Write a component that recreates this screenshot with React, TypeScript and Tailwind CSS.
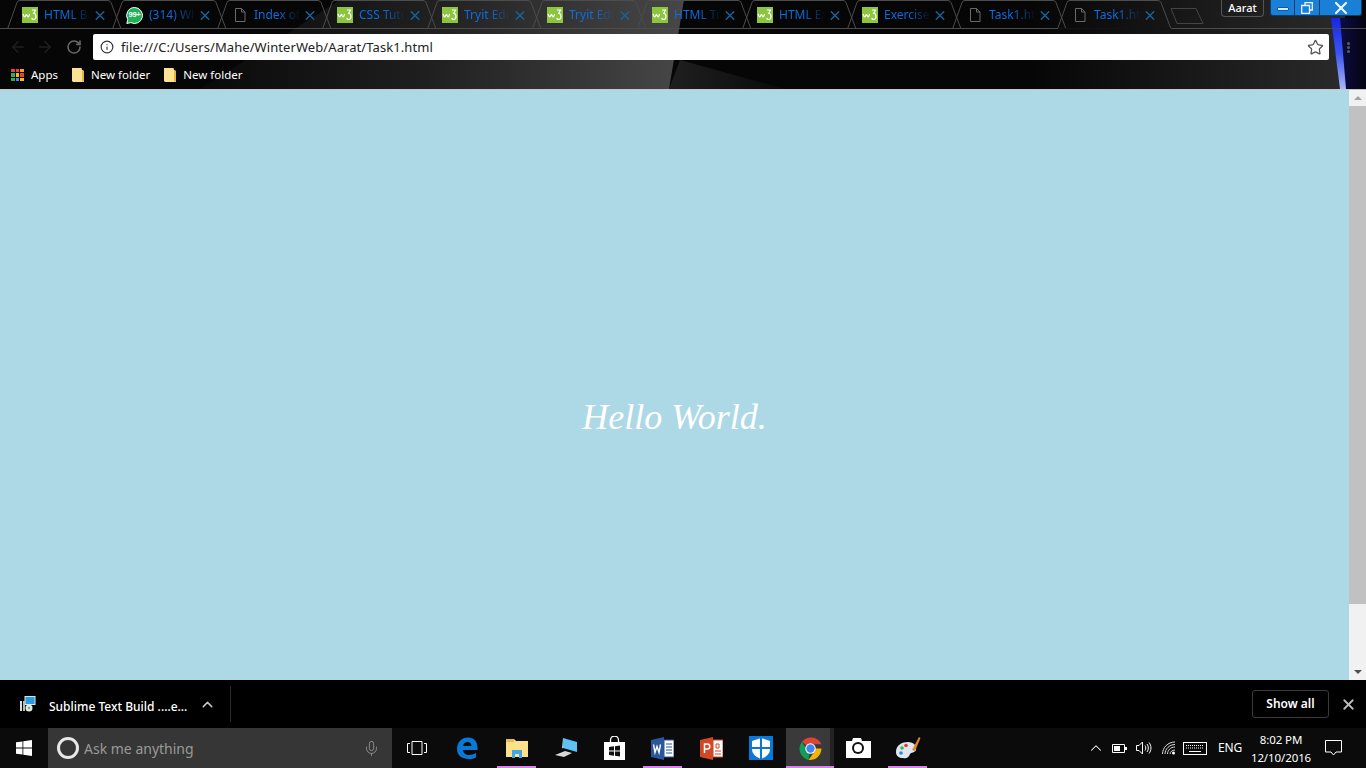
import { ArrowLeft, ArrowRight, ChevronUp, Info, Mic, RotateCw, Star, X } from "lucide-react";

const ui = "font-['Noto_Sans',sans-serif]";

const tabs = [
  { title: "HTML Ba", icon: "w3" },
  { title: "(314) Wh", icon: "wa" },
  { title: "Index of", icon: "file" },
  { title: "CSS Tuto", icon: "w3" },
  { title: "Tryit Edit", icon: "w3" },
  { title: "Tryit Edit", icon: "w3" },
  { title: "HTML Tu", icon: "w3" },
  { title: "HTML Ex", icon: "w3" },
  { title: "Exercise", icon: "w3" },
  { title: "Task1.ht", icon: "file" },
  { title: "Task1.ht", icon: "file", active: true },
];

function W3Icon() {
  return (
    <svg width="16" height="16" viewBox="0 0 16 16" className="shrink-0">
      <rect width="16" height="16" fill="#8cc63f" />
      <path d="M1 7c.6 2 1.200 2.800 1.800 2.800.8 0 1-2.200 1.600-2.200.7 0 .8 2.200 1.600 2.200.7 0 1.200-1 1.600-2.800" stroke="#fff" strokeWidth="1.200" fill="none" />
      <path d="M10 3h3.500l-1.800 3.500c1.800 0 2.300 1.300 2.300 2.800 0 1.800-1 3.200-2.300 3.200-1.100 0-1.800-.7-2-1.500" stroke="#fff" strokeWidth="1.200" fill="none" />
    </svg>
  );
}

function WhatsIcon() {
  return (
    <div className="relative -ml-[1px] size-[17px] shrink-0">
      <svg width="17" height="17" viewBox="0 0 17 17" className="absolute inset-0">
        <path d="M8.500 0.500a8 8 0 1 1-3.700 15.100L0.800 16.500l1-3.800A8 8 0 0 1 8.500 0.500z" fill="#1fb355" stroke="#fff" />
      </svg>
      <span className="absolute inset-0 flex items-center justify-center font-['Liberation_Sans',sans-serif] text-[7.500px] font-bold tracking-[-0.3px] text-white">
        99+
      </span>
    </div>
  );
}

function FileIcon() {
  return (
    <svg width="16" height="16" viewBox="0 0 16 16" fill="none" stroke="#6a6a6a" className="shrink-0">
      <path d="M3.500 1.500h6l3.500 3.500v9.500h-9.500z M9.500 1.500v3.500h3.500" />
    </svg>
  );
}

function Tab({ title, icon, active }: { title: string; icon: string; active?: boolean }) {
  return (
    <div className="relative flex h-[28px] w-[105px] shrink-0 items-center pl-[15px] pt-[2px]">
      <svg width="116" height="29" viewBox="0 0 116 29" fill="none" className="absolute left-0 top-0">
        <path d="M0.500 29 L10 2.500 Q10.500 0.500 13 0.500 L101 0.500 Q103 0.500 104 2.500 L114 29" stroke="#4c4c4c" />
      </svg>
      {active && <div className="absolute bottom-[-1px] left-[1px] h-[1px] w-[113px] bg-[#131313]" />}
      {icon === "w3" && <W3Icon />}
      {icon === "wa" && <WhatsIcon />}
      {icon === "file" && <FileIcon />}
      <span className="ml-[6px] w-[49px] shrink-0 whitespace-nowrap bg-gradient-to-r from-[#0a6fe6] from-50% to-[#0a6fe600] to-95% bg-clip-text text-[12px] text-transparent">
        {title}
      </span>
      <X size={15} strokeWidth={2.300} className="shrink-0 -translate-x-[0.5px] text-[#17639f]" />
    </div>
  );
}

function AppsIcon() {
  const colors = ["#ea4335", "#ea4335", "#f4a020", "#34a853", "#fbbc05", "#ea4335", "#34a853", "#4285f4", "#fbbc05"];
  return (
    <div className="grid size-[13px] grid-cols-3 gap-[1px]">
      {colors.map((c, i) => (
        <div key={i} className="size-[3.600px]" style={{ background: c }} />
      ))}
    </div>
  );
}

function FolderIcon() {
  return (
    <svg width="12" height="14" viewBox="0 0 12 14" className="shrink-0">
      <path d="M0 0h9.500l.5 2 2 1v11H1l-1-1z" fill="#fde293" />
      <path d="M10 2l2 1v10l-2 1z" fill="#e2b93f" />
    </svg>
  );
}

function Bookmark({ label }: { label: string }) {
  return (
    <div className="flex items-center gap-[7px]">
      <FolderIcon />
      <span className="text-[11.500px] text-white">{label}</span>
    </div>
  );
}

function Header() {
  return (
    <div className={`relative h-[89px] shrink-0 overflow-hidden bg-[#060606] ${ui}`}>
      {/* theme artwork behind the chrome */}
      <svg width="1366" height="89" viewBox="0 0 1366 89" className="absolute left-0 top-0">
        <defs>
          <linearGradient id="g1" x1="0" x2="1" y1="0" y2="0">
            <stop offset="0" stopColor="#0a0a0a" />
            <stop offset="0.45" stopColor="#1e1e1e" />
            <stop offset="1" stopColor="#474747" />
          </linearGradient>
          <linearGradient id="g2" x1="0" x2="1" y1="0" y2="0">
            <stop offset="0" stopColor="#1f1f1f" />
            <stop offset="1" stopColor="#0a0a0a" />
          </linearGradient>
          <linearGradient id="g3" x1="0" x2="0" y1="0" y2="1">
            <stop offset="0" stopColor="#1726e8" />
            <stop offset="0.5" stopColor="#3a55f0" />
            <stop offset="1" stopColor="#aab6f7" />
          </linearGradient>
          <linearGradient id="g4" x1="0" x2="1" y1="0" y2="0">
            <stop offset="0" stopColor="#060606" />
            <stop offset="1" stopColor="#2a2a2a" />
          </linearGradient>
          <linearGradient id="g5" x1="0" x2="1" y1="0" y2="0">
            <stop offset="0" stopColor="#0c0c45" />
            <stop offset="1" stopColor="#040410" />
          </linearGradient>
        </defs>
        <polygon points="340,0 684,0 669,89 200,89" fill="url(#g1)" />
        <polygon points="680,60 785,89 669,89" fill="url(#g2)" />
        <polygon points="1030,0 1345,0 1345,89 1030,89" fill="url(#g4)" />
        <polygon points="1340,18 1366,18 1366,89 1345,89" fill="url(#g5)" />
        <polygon points="1331,18 1340,18 1346,89 1340,89" fill="url(#g3)" />
      </svg>

      <div className="relative flex h-[29px] border-b border-[#4c4c4c] pl-[7px]">
        {tabs.map((t, i) => (
          <Tab key={i} title={t.title} icon={t.icon} active={t.active} />
        ))}
        <div className="ml-[8px] mt-[7px]">
          <svg width="34" height="18" viewBox="0 0 34 18" fill="none" stroke="#444">
            <path d="M1 1.500h25l7 15H7z" strokeLinejoin="round" />
          </svg>
        </div>
        <div className="ml-auto flex items-start pr-[4px]">
          <div className="mr-[6px] flex h-[17px] w-[43px] items-center justify-center rounded-b-[4px] border border-t-0 border-[#555] text-[11px] font-medium text-white">
            Aarat
          </div>
          <div className="flex h-[16px] w-[92px] overflow-hidden rounded-b-[3px] border-x border-b border-[#0d3f6e] bg-[#1a7fd6]">
            <div className="flex w-[24px] items-center justify-center border-r border-[#0d3f6e]">
              <div className="mt-[3px] h-[4px] w-[12px] rounded-[1px] border border-[#0d5ba0] bg-[#d8ecfa]" />
            </div>
            <div className="flex w-[25px] items-center justify-center border-r border-[#0d3f6e]">
              <svg width="12" height="12" viewBox="0 0 12 12" fill="none" stroke="#e8f4fc" strokeWidth="1.300">
                <path d="M4 3V.7h7.300V8H9 M.7 3.500H8.500v7.800H.7z" />
              </svg>
            </div>
            <div className="flex flex-1 items-center justify-center">
              <X size={20} strokeWidth={2.600} className="text-[#e8f4fc]" />
            </div>
          </div>
        </div>
      </div>

      <div className="relative h-[33px] pt-[5px]">
        <div className="flex h-[26px] items-center">
          <ArrowLeft size={18} className="ml-[9px] text-[#1f1f1f]" />
          <ArrowRight size={18} className="ml-[9px] text-[#1f1f1f]" />
          <RotateCw size={16} strokeWidth={2.400} className="ml-[12px] text-[#666]" />
          <div className="ml-[11px] flex h-[26px] w-[1236px] items-center rounded-[2px] bg-white pl-[7px] pr-[5px]">
            <Info size={14} className="text-[#333]" />
            <span className="ml-[7px] mt-[1px] text-[13px] tracking-[0.08px] text-[#222]">file:///C:/Users/Mahe/WinterWeb/Aarat/Task1.html</span>
            <Star size={17} strokeWidth={1.800} className="ml-auto text-[#555]" />
          </div>
          <div className="ml-[18px] flex flex-col gap-[1px]">
            <div className="size-[3px] rounded-full bg-[#5c5c5c]" />
            <div className="size-[3px] rounded-full bg-[#5c5c5c]" />
            <div className="size-[3px] rounded-full bg-[#5c5c5c]" />
          </div>
        </div>
      </div>

      <div className="relative flex h-[27px] items-center pb-[1px] pl-[11px]">
        <AppsIcon />
        <span className="ml-[7px] text-[11.500px] text-white">Apps</span>
        <div className="ml-[14px]">
          <Bookmark label="New folder" />
        </div>
        <div className="ml-[14px]">
          <Bookmark label="New folder" />
        </div>
      </div>
    </div>
  );
}

function Scrollbar() {
  return (
    <div className="flex w-[17px] shrink-0 flex-col bg-[#f1f1f1]">
      <div className="flex h-[16px] items-center justify-center">
        <div className="size-0 border-x-[4px] border-b-[4px] border-x-transparent border-b-[#a3a3a3]" />
      </div>
      <div className="h-[498px] bg-[#c1c1c1]" />
      <div className="flex-1" />
      <div className="flex h-[17px] items-center justify-center">
        <div className="size-0 border-x-[4px] border-t-[4px] border-x-transparent border-t-[#505050]" />
      </div>
    </div>
  );
}

function DownloadBar() {
  return (
    <div className={`flex h-[48px] shrink-0 items-center bg-black ${ui}`}>
      <div className="flex h-[36px] w-[231px] items-center border-r border-[#2a2a2a] pl-[20px]">
        <svg width="16" height="17" viewBox="0 0 16 17" className="shrink-0">
          <rect x="5" y="0.500" width="10" height="8" fill="#2a9be0" stroke="#cfe8f7" />
          <rect x="0" y="5" width="2" height="10" fill="#ddd" />
          <rect x="3" y="5" width="2" height="10" fill="#bbb" />
          <circle cx="9" cy="12" r="3.500" fill="#e8e8e8" />
          <circle cx="9" cy="12" r="1.200" fill="#6bbf3a" />
        </svg>
        <span className="ml-[13px] mt-[5px] whitespace-nowrap text-[12px] font-medium text-white">Sublime Text Build ....e...</span>
        <ChevronUp size={17} className="ml-[12px] text-[#c8c8c8]" />
      </div>
      <div className="ml-auto flex h-[28px] w-[77px] items-center justify-center rounded-[3px] border border-[#3a3a3a] text-[12px] font-semibold text-white">
        Show all
      </div>
      <X size={17} strokeWidth={2.500} className="ml-[11px] mr-[9px] text-[#bdbdbd]" />
    </div>
  );
}

function TaskSlot({ children, on, w = 49 }: { children: React.ReactNode; on?: "run" | "active"; w?: number }) {
  return (
    <div className={`relative flex h-[40px] shrink-0 items-center justify-center ${on === "active" ? "bg-[#3a3a3a]" : ""}`} style={{ width: w }}>
      {children}
      {on === "run" && <div className="absolute bottom-0 left-[5px] right-[5px] h-[2px] bg-[#d982ec]" />}
      {on === "active" && <div className="absolute inset-x-0 bottom-0 h-[2px] bg-[#d982ec]" />}
      {on === "active" && <div className="absolute bottom-[2px] right-0 top-0 w-[4px] bg-[#222]" />}
    </div>
  );
}

function Taskbar() {
  return (
    <div className={`flex h-[40px] shrink-0 items-center bg-[#0b0b0b] ${ui}`}>
      <div className="flex w-[48px] justify-center">
        <svg width="16" height="16" viewBox="0 0 16 16" fill="#fff">
          <path d="M0 2.300l6.500-.9v6.200H0z M7.300 1.300L16 0v7.600H7.300z M0 8.400h6.500v6.200L0 13.700z M7.300 8.400H16V16l-8.700-1.300z" />
        </svg>
      </div>
      <div className="flex h-[40px] w-[344px] items-center bg-[#363636] pl-[9px] pr-[12px]">
        <div className="size-[22px] rounded-full border-[3px] border-[#e8e8e8]" />
        <span className="ml-[5px] mt-[1px] text-[14px] text-[#999]">Ask me anything</span>
        <Mic size={17} strokeWidth={1.400} className="ml-auto text-[#8c8c8c]" />
      </div>
      <div className="flex w-[49px] justify-center">
        <svg width="20" height="14" viewBox="0 0 20 14" fill="none" stroke="#fff">
          <path d="M5 .5h10v13H5z M3 2.500H.5v9H3 M17 2.500h2.500v9H17" />
        </svg>
      </div>
      <TaskSlot w={51}>
        <svg width="22" height="22" viewBox="0 0 22 22" className="ml-[1px]">
          <path d="M1 12C1 5 6 0.500 12 0.500c6 0 9.500 4 9.500 10.500v2H7c.2 3.500 3 5 6 5 2.500 0 5-.8 7-2v4.500c-2 1-4.500 1.500-7.500 1.500C6 22 1 18.500 1 12zM7 9h8.500c0-2.500-1.800-4-4-4C9 5 7.300 6.800 7 9z" fill="#0a78d7" />
        </svg>
      </TaskSlot>
      <TaskSlot on="run">
        <svg width="22" height="20" viewBox="0 0 22 20">
          <path d="M0 1h8l2 2h12v16H0z" fill="#fde08a" />
          <rect x="0" y="1" width="8" height="3" fill="#e8bd4f" />
          <path d="M6 12h10v8h-3v-4H9v4H6z" fill="#3fa9e8" />
        </svg>
      </TaskSlot>
      <TaskSlot>
        <svg width="24" height="22" viewBox="0 0 24 22">
          <path d="M9 1l14 4v10L9 11z" fill="#5dc2f4" />
          <path d="M9 1l-1 10 1 .4z" fill="#ccc" />
          <path d="M1 18l10-4 7 2-8 4z" fill="#d8d8d8" />
        </svg>
      </TaskSlot>
      <TaskSlot w={48}>
        <svg width="21" height="24" viewBox="0 0 21 24">
          <path d="M6.500 6V4a4 4 0 0 1 8 0v2" stroke="#fff" fill="none" strokeWidth="1.300" />
          <path d="M0 6h21v18H0z" fill="#fff" />
          <path d="M5 11l5-.7v4.200H5zM11 10.200l5-.7v5h-5zM5 15.500h5v4.200L5 19zM11 15.500h5v5l-5-.7z" fill="#111" />
        </svg>
      </TaskSlot>
      <TaskSlot on="run">
        <svg width="23" height="23" viewBox="0 0 23 23">
          <path d="M0 3l13-3v23L0 20z" fill="#2b579a" />
          <path d="M13 3h10v17H13z" fill="#fff" stroke="#2b579a" />
          <path d="M15 7h6M15 10h6M15 13h6M15 16h6" stroke="#2b579a" />
          <path d="M2.500 7.500l1.500 8 2-6 2 6 1.500-8" stroke="#fff" fill="none" strokeWidth="1.400" />
        </svg>
      </TaskSlot>
      <TaskSlot>
        <svg width="23" height="23" viewBox="0 0 23 23">
          <path d="M0 3l13-3v23L0 20z" fill="#d24726" />
          <path d="M13 3h10v17H13z" fill="#fff" stroke="#d24726" />
          <path d="M16 7h3v4h-3zM15 14h6M15 17h6" stroke="#d24726" fill="none" />
          <path d="M4.500 16V7h3c3 0 3 5 0 5h-3" stroke="#fff" fill="none" strokeWidth="1.500" />
        </svg>
      </TaskSlot>
      <TaskSlot w={50}>
        <div className="flex size-[24px] items-center justify-center bg-[#0a78d7]">
          <svg width="20" height="21" viewBox="0 0 20 21">
            <path d="M10 0l9 3v8c0 5-4 8-9 10-5-2-9-5-9-10V3z" fill="#fff" />
            <path d="M9 0h2v21H9zM1 9h18v2H1z" fill="#0a78d7" />
          </svg>
        </div>
      </TaskSlot>
      <TaskSlot on="active" w={48}>
        <svg width="25" height="25" viewBox="0 0 24 24" className="relative">
          <path d="M12 12L3.800 5.500A11 11 0 0 1 22.500 8H12z" fill="#db4437" />
          <path d="M12 12H22.500A11 11 0 0 1 10 23l5-7z" fill="#f4b400" />
          <path d="M12 12l-2 11A11 11 0 0 1 3.800 5.500L9 14z" fill="#0f9d58" />
          <circle cx="12" cy="12" r="5" fill="#fff" />
          <circle cx="12" cy="12" r="4" fill="#4285f4" />
        </svg>
      </TaskSlot>
      <TaskSlot>
        <svg width="25" height="20" viewBox="0 0 25 20">
          <path d="M0 3h6l1-3h8l1 3h9v17H0z" fill="#fff" />
          <circle cx="12" cy="10" r="6" fill="#111" />
          <circle cx="12" cy="10" r="4" fill="#fff" />
        </svg>
      </TaskSlot>
      <TaskSlot on="run">
        <svg width="26" height="24" viewBox="0 0 26 24">
          <path d="M1 16C1 9 7 6 13 6c6 0 9 4 8 8-1 3-5 2-6 4-1 3-3 5-7 4-4 0-7-2-7-6z" fill="#dfe7ee" />
          <circle cx="7" cy="12" r="1.800" fill="#4caf50" />
          <circle cx="11" cy="9.500" r="1.800" fill="#e53935" />
          <circle cx="6" cy="17" r="1.800" fill="#1e88e5" />
          <path d="M17 14L24 1l1.500 1L20 15z" fill="#d98a2b" />
        </svg>
      </TaskSlot>

      <div className="ml-auto flex items-center text-white">
        <ChevronUp size={18} strokeWidth={1.400} className="translate-x-[1px]" />
        <svg width="15" height="9" viewBox="0 0 15 9" className="ml-[8px]">
          <path d="M.5.5h12v8H.5z" fill="none" stroke="#fff" />
          <path d="M2 2h6v5H2zM13 3h2v3h-2z" fill="#fff" />
        </svg>
        <svg width="16" height="14" viewBox="0 0 16 14" fill="none" stroke="#fff" className="ml-[9px]">
          <path d="M.5 4.500h2.500L6.500 1v12L3 9.500H.5z M9 4.500c1 1.500 1 3.500 0 5 M11 3c1.800 2.300 1.800 5.700 0 8 M13 1.500c2.600 3.200 2.600 7.800 0 11" />
        </svg>
        <svg width="14" height="14" viewBox="0 0 14 14" fill="none" stroke="#ddd" className="ml-[10px]">
          <path d="M.5 13C.5 6.500 6 1 13 1 M3 13c0-5 4.500-9.500 10-9.500 M5.500 13c0-3.500 3-7 7.500-7 M8 13c0-2 2-4 5-4" />
          <circle cx="11.500" cy="12" r="1.500" fill="#fff" stroke="none" />
        </svg>
        <svg width="24" height="13" viewBox="0 0 24 13" fill="none" stroke="#fff" className="ml-[7px]">
          <rect x=".5" y=".5" width="23" height="12" />
          <path d="M3 3.500h18M3 6h18" strokeDasharray="1 1" />
          <path d="M6 9.500h12" />
        </svg>
        <span className="ml-[11px] text-[12px] tracking-[-0.2px]">ENG</span>
        <div className="ml-[9px] mt-[1px] flex w-[60px] flex-col items-center text-[11.500px] leading-[18px] tracking-[-0.1px]">
          <span>8:02 PM</span>
          <span>12/10/2016</span>
        </div>
        <svg width="17" height="16" viewBox="0 0 17 16" fill="none" stroke="#fff" className="ml-[14px] mr-[24px]">
          <path d="M.5.5h16V12H11l-2.500 3L6 12H.5z" />
        </svg>
      </div>
    </div>
  );
}

export default function App() {
  return (
    <div className="flex h-[768px] w-[1366px] flex-col overflow-hidden bg-black">
      <Header />
      <div className="flex min-h-0 flex-1 border-t border-[#c4c8cc]">
        <div className="flex flex-1 items-center justify-center bg-[#add8e6] pt-[64px]">
          <span className="font-['Liberation_Serif',serif] text-[36px] italic text-white">Hello World.</span>
        </div>
        <Scrollbar />
      </div>
      <DownloadBar />
      <Taskbar />
    </div>
  );
}
